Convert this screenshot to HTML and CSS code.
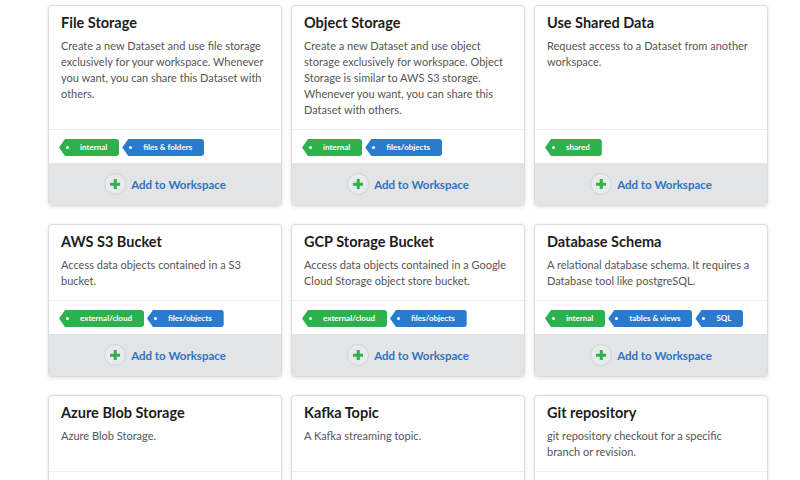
FILE: index.html
```html
<!DOCTYPE html>
<html>
<head>
<meta charset="utf-8">
<link rel="stylesheet" href="styles.css">
</head>
<body>
<div class="grid">
  <div class="card">
    <div class="body"><h3>File Storage</h3><p>Create a new Dataset and use file storage exclusively for your workspace. Whenever you want, you can share this Dataset with others.</p></div>
    <div class="tags"><span class="tag green">internal</span><span class="tag blue">files &amp; folders</span></div>
    <div class="foot"><span class="plus"></span><span class="add">Add to Workspace</span></div>
  </div>
  <div class="card">
    <div class="body"><h3>Object Storage</h3><p>Create a new Dataset and use object storage exclusively for workspace. Object Storage is similar to AWS S3 storage. Whenever you want, you can share this Dataset with others.</p></div>
    <div class="tags"><span class="tag green">internal</span><span class="tag blue">files/objects</span></div>
    <div class="foot"><span class="plus"></span><span class="add">Add to Workspace</span></div>
  </div>
  <div class="card">
    <div class="body"><h3>Use Shared Data</h3><p>Request access to a Dataset from another workspace.</p></div>
    <div class="tags"><span class="tag green">shared</span></div>
    <div class="foot"><span class="plus"></span><span class="add">Add to Workspace</span></div>
  </div>
  <div class="card">
    <div class="body"><h3>AWS S3 Bucket</h3><p>Access data objects contained in a S3 bucket.</p></div>
    <div class="tags"><span class="tag green">external/cloud</span><span class="tag blue">files/objects</span></div>
    <div class="foot"><span class="plus"></span><span class="add">Add to Workspace</span></div>
  </div>
  <div class="card">
    <div class="body"><h3>GCP Storage Bucket</h3><p>Access data objects contained in a Google Cloud Storage object store bucket.</p></div>
    <div class="tags"><span class="tag green">external/cloud</span><span class="tag blue">files/objects</span></div>
    <div class="foot"><span class="plus"></span><span class="add">Add to Workspace</span></div>
  </div>
  <div class="card">
    <div class="body"><h3>Database Schema</h3><p>A relational database schema. It requires a Database tool like postgreSQL.</p></div>
    <div class="tags"><span class="tag green">internal</span><span class="tag blue">tables &amp; views</span><span class="tag blue">SQL</span></div>
    <div class="foot"><span class="plus"></span><span class="add">Add to Workspace</span></div>
  </div>
  <div class="card">
    <div class="body"><h3>Azure Blob Storage</h3><p>Azure Blob Storage.</p></div>
    <div class="tags"></div>
  </div>
  <div class="card">
    <div class="body"><h3>Kafka Topic</h3><p>A Kafka streaming topic.</p></div>
    <div class="tags"></div>
  </div>
  <div class="card">
    <div class="body"><h3>Git repository</h3><p>git repository checkout for a specific branch or revision.</p></div>
    <div class="tags"></div>
  </div>
</div>
</body>
</html>
```

FILE: styles.css
```css
html, body {
  margin: 0;
  padding: 0;
  background: #fff;
  overflow: hidden;
  height: 480px;
}
body {
  font-family: Lato, "Open Sans", sans-serif;
  color: #222;
}
.grid {
  display: grid;
  grid-template-columns: repeat(3, 234px);
  column-gap: 9px;
  row-gap: 18px;
  padding: 5px 0 0 48px;
}
.card {
  display: flex;
  flex-direction: column;
  border: 1px solid #dcdcdc;
  border-radius: 4px;
  box-shadow: 0 1px 4px rgba(0,0,0,0.12);
  overflow: hidden;
  background: #fff;
}
.body {
  flex: 1;
  padding: 7px 12px 11px 12px;
}
.body h3 {
  margin: 0 0 5px 0;
  font-size: 14.5px;
  line-height: 20px;
  font-weight: 700;
  color: #1d1d1d;
}
.body p {
  margin: 0;
  font-size: 11px;
  line-height: 16px;
  color: #555;
}
.tags {
  border-top: 1px solid #efefef;
  display: flex;
  gap: 3px;
  padding: 9px 10px 7px 10px;
  height: 17px;
}
.tag {
  position: relative;
  height: 17px;
  line-height: 17px;
  padding: 0 12px 0 21px;
  font-size: 8px;
  font-weight: 700;
  color: #fff;
  border-radius: 3px;
  clip-path: polygon(6px 0, 100% 0, 100% 100%, 6px 100%, 0 50%);
}
.tag::after {
  content: "";
  position: absolute;
  left: 7px;
  top: 7px;
  width: 3px;
  height: 3px;
  border-radius: 50%;
  background: #fff;
}
.green { background: #2bb24c; }
.blue { background: #2a7bd0; }
.foot {
  background: #e3e4e6;
  height: 42px;
  display: flex;
  align-items: center;
  justify-content: center;
  gap: 5px;
}
.plus {
  position: relative;
  width: 20px;
  height: 20px;
  border-radius: 50%;
  border: 1px solid #d2d3d5;
  background: #e9eaeb;
}
.plus::before, .plus::after {
  content: "";
  position: absolute;
  background: #2eb34b;
  left: 50%;
  top: 50%;
  transform: translate(-50%, -50%);
}
.plus::before { width: 10px; height: 2.5px; }
.plus::after { width: 2.5px; height: 10px; }
.add {
  font-size: 11.5px;
  font-weight: 700;
  color: #2f72bf;
}
```
